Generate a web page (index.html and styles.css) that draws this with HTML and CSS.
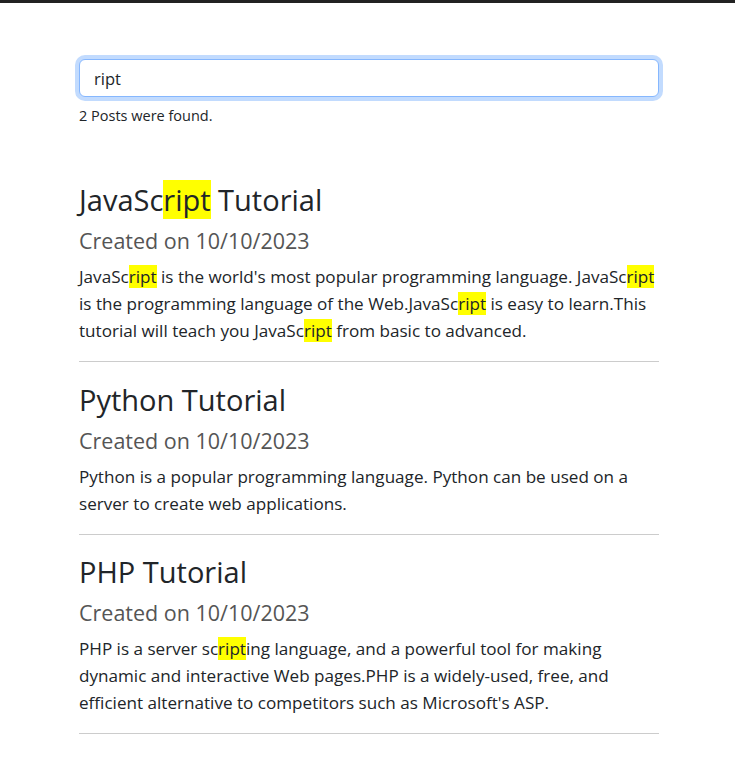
FILE: index.html
```html
<!DOCTYPE html>
<html lang="en">
<head>
<meta charset="utf-8">
<title>Posts search</title>
<link rel="stylesheet" href="styles.css">
</head>
<body>
<div class="topbar"></div>
<main class="container">
  <div class="search">
    <input class="search-input" type="text" value="ript" aria-label="Search posts">
    <div class="count">2 Posts were found.</div>
  </div>
  <section class="posts">
    <article class="post">
      <h2 class="post-title">JavaSc<mark>ript</mark> Tutorial</h2>
      <h3 class="post-date">Created on 10/10/2023</h3>
      <p class="post-body">JavaSc<mark>ript</mark> is the world's most popular programming language. JavaSc<mark>ript</mark> is the programming language of the Web.JavaSc<mark>ript</mark> is easy to learn.This tutorial will teach you JavaSc<mark>ript</mark> from basic to advanced.</p>
    </article>
    <hr class="divider">
    <article class="post">
      <h2 class="post-title">Python Tutorial</h2>
      <h3 class="post-date">Created on 10/10/2023</h3>
      <p class="post-body">Python is a popular programming language. Python can be used on a server to create web applications.</p>
    </article>
    <hr class="divider">
    <article class="post">
      <h2 class="post-title">PHP Tutorial</h2>
      <h3 class="post-date">Created on 10/10/2023</h3>
      <p class="post-body">PHP is a server sc<mark>ript</mark>ing language, and a powerful tool for making dynamic and interactive Web pages.PHP is a widely-used, free, and efficient alternative to competitors such as Microsoft's ASP.</p>
    </article>
    <hr class="divider">
  </section>
</main>
</body>
</html>
```
FILE: styles.css
```css
* { box-sizing: border-box; }
html, body { margin: 0; padding: 0; background: #fff; }
body {
  font-family: "Open Sans", "Noto Sans", sans-serif;
  color: #212529;
}
.topbar { height: 3px; background: #222; }
.container {
  width: 580px;
  margin-left: 79px;
  padding-top: 56px;
}
.search-input {
  display: block;
  width: 100%;
  height: 38px;
  padding: 6px 14px;
  font: inherit;
  font-size: 16.5px;
  color: #212529;
  background: #fff;
  border: 1px solid #86b7fe;
  border-radius: 6px;
  box-shadow: 0 0 0 4px rgba(13, 110, 253, 0.25);
  outline: none;
}
.count {
  margin-top: 8px;
  font-size: 14.5px;
  line-height: 21px;
}
.posts { margin-top: 54px; }
.post-title {
  margin: 0;
  font-size: 29px;
  font-weight: 400;
  line-height: 40px;
}
.post-date {
  margin: 4px 0 0;
  font-size: 21.5px;
  font-weight: 400;
  line-height: 34px;
  color: #555;
}
.post-body {
  margin: 5px 0 0;
  font-size: 17.1px;
  line-height: 27px;
}
mark { background: #ff0; color: inherit; padding: 0; }
.divider {
  margin: 17px 0 17px;
  border: 0;
  border-top: 1px solid #ccc;
  height: 0;
}
.post:first-child + .divider { margin-bottom: 18px; }
```
